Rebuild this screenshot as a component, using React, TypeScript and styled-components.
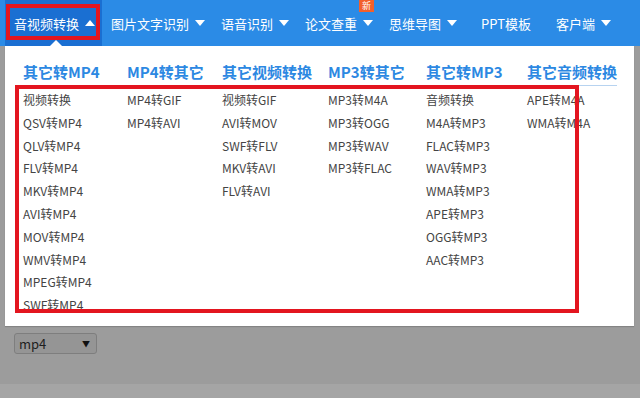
import styled, { createGlobalStyle } from 'styled-components';

const GlobalStyle = createGlobalStyle`
    html, body {
        margin: 0;
        padding: 0;
        background: #9c9c9c;
        font-family: "Noto Sans CJK SC", "Noto Sans", sans-serif;
    }
`

const Page = styled('div')`
    width: 640px;
    height: 398px;
    overflow: hidden;
    display: flex;
    flex-direction: column;
    background: linear-gradient(#9c9c9c 0, #9c9c9c 384px, #a5a5a5 384px);
`

const NavBar = styled('nav')`
    height: 46px;
    background: #2b8be6;
    display: flex;
    align-items: stretch;
    padding-left: 5px;
`

const NavItem = styled('div')<{ $active?: boolean; $extra?: number }>`
    position: relative;
    display: flex;
    align-items: center;
    padding: 0 ${props => 7 + (props.$extra || 0)}px 0 9px;
    color: #fff;
    font-size: 13px;
    white-space: nowrap;
    background: ${props => props.$active ? '#1a6fd2' : 'transparent'};
`

const Caret = styled('span')<{ $up?: boolean }>`
    display: inline-block;
    margin-left: 6px;
    width: 0;
    height: 0;
    border-left: 5px solid transparent;
    border-right: 5px solid transparent;
    ${props => props.$up ? 'border-bottom: 6px solid #fff;' : 'border-top: 6px solid #fff;'}
`

const Pointer = styled('span')`
    position: absolute;
    left: 45px;
    bottom: 0;
    width: 0;
    height: 0;
    border-left: 6px solid transparent;
    border-right: 6px solid transparent;
    border-bottom: 6px solid #fff;
`

const NewBadge = styled('span')`
    position: absolute;
    top: 0;
    right: 6px;
    width: 15px;
    height: 12px;
    background: #f2602c;
    color: #fff;
    font-size: 9px;
    line-height: 12px;
    text-align: center;
`

const Mark = styled('span')<{ $l: number; $t: number; $w: number; $h: number }>`
    position: absolute;
    left: ${props => props.$l}px;
    top: ${props => props.$t}px;
    width: ${props => props.$w}px;
    height: ${props => props.$h}px;
    border: 4px solid #e3151f;
    box-sizing: border-box;
    pointer-events: none;
`

const Panel = styled('div')`
    position: relative;
    margin-left: 5px;
    width: 629px;
    height: 280px;
    box-sizing: border-box;
    background: #fff;
    padding: 12px 0 0 18px;
    overflow: hidden;
    box-shadow: 0 1px 1px rgba(0, 0, 0, 0.15);
`

const Columns = styled('div')`
    display: grid;
    grid-template-columns: 104px 95px 106px 98px 101px auto;
`

const Column = styled('div')`
    display: flex;
    flex-direction: column;
    align-items: flex-start;
`

const Heading = styled('div')`
    font-size: 15px;
    font-weight: 700;
    color: #2c88e2;
    line-height: 27px;
    border-bottom: 1px solid #b7d3f0;
    white-space: nowrap;
`

const ItemList = styled('ul')`
    list-style: none;
    margin: 0;
    padding: 3px 0 0 0;
`

const Item = styled('li')`
    font-size: 12px;
    line-height: 22.8px;
    color: #444;
    white-space: nowrap;
`

const Below = styled('div')`
    padding: 7px 0 0 14px;
`

const Select = styled('div')`
    width: 83px;
    height: 21px;
    box-sizing: border-box;
    border: 1px solid #7e7e7e;
    border-radius: 3px;
    background: #959595;
    display: flex;
    align-items: center;
    justify-content: space-between;
    padding: 0 6px 0 4px;
    font-size: 13px;
    color: #1e1e1e;
`

const SelectArrow = styled('span')`
    font-size: 8px;
    color: #111;
`

const menu = [
    { title: '其它转MP4', items: ['视频转换', 'QSV转MP4', 'QLV转MP4', 'FLV转MP4', 'MKV转MP4', 'AVI转MP4', 'MOV转MP4', 'WMV转MP4', 'MPEG转MP4', 'SWF转MP4'] },
    { title: 'MP4转其它', items: ['MP4转GIF', 'MP4转AVI'] },
    { title: '其它视频转换', items: ['视频转GIF', 'AVI转MOV', 'SWF转FLV', 'MKV转AVI', 'FLV转AVI'] },
    { title: 'MP3转其它', items: ['MP3转M4A', 'MP3转OGG', 'MP3转WAV', 'MP3转FLAC'] },
    { title: '其它转MP3', items: ['音频转换', 'M4A转MP3', 'FLAC转MP3', 'WAV转MP3', 'WMA转MP3', 'APE转MP3', 'OGG转MP3', 'AAC转MP3'] },
    { title: '其它音频转换', items: ['APE转M4A', 'WMA转M4A'] },
]

const App = () => {
    return (
        <Page>
            <GlobalStyle />
            <NavBar>
                <NavItem $active>
                    音视频转换<Caret $up />
                    <Pointer />
                    <Mark $l={1} $t={4} $w={94} $h={36} />
                </NavItem>
                <NavItem>图片文字识别<Caret /></NavItem>
                <NavItem>语音识别<Caret /></NavItem>
                <NavItem>论文查重<Caret /><NewBadge>新</NewBadge></NavItem>
                <NavItem $extra={8}>思维导图<Caret /></NavItem>
                <NavItem $extra={9}>PPT模板</NavItem>
                <NavItem>客户端<Caret /></NavItem>
            </NavBar>
            <Panel>
                <Columns>
                    {menu.map(col => (
                        <Column key={col.title}>
                            <Heading>{col.title}</Heading>
                            <ItemList>
                                {col.items.map(item => <Item key={item}>{item}</Item>)}
                            </ItemList>
                        </Column>
                    ))}
                </Columns>
                <Mark $l={10} $t={39} $w={564} $h={228} />
            </Panel>
            <Below>
                <Select>mp4<SelectArrow>▼</SelectArrow></Select>
            </Below>
        </Page>
    );
};

export default App;
